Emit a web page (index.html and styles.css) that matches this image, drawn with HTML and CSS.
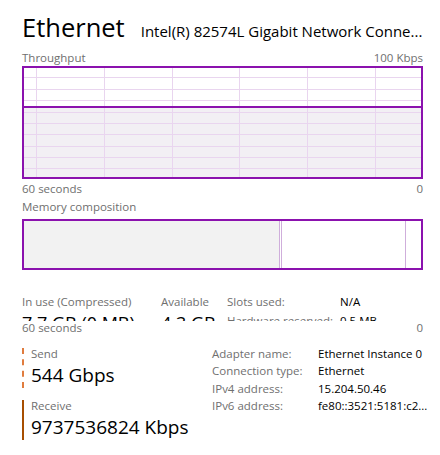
FILE: index.html
```html
<!DOCTYPE html>
<html lang="en">
<head>
<meta charset="utf-8">
<title>Ethernet</title>
<link rel="stylesheet" href="styles.css">
</head>
<body>
<div class="page">
  <header class="head">
    <h1 class="title">Ethernet</h1>
    <div class="subtitle">Intel(R) 82574L Gigabit Network Conne...</div>
  </header>

  <div class="axis axis-top"><span>Throughput</span><span>100 Kbps</span></div>
  <svg class="graph" width="401" height="113" viewBox="0 0 401 113">
    <rect x="1" y="41" width="399" height="71" fill="#f2eff4"/>
    <g stroke="#e9d5ef" stroke-width="1">
      <line x1="14.5" y1="1" x2="14.5" y2="112"/>
      <line x1="82.5" y1="1" x2="82.5" y2="112"/>
      <line x1="150.5" y1="1" x2="150.5" y2="112"/>
      <line x1="217.5" y1="1" x2="217.5" y2="112"/>
      <line x1="285.5" y1="1" x2="285.5" y2="112"/>
      <line x1="353.5" y1="1" x2="353.5" y2="112"/>
      <line x1="1" y1="11.5" x2="400" y2="11.5"/>
      <line x1="1" y1="23.5" x2="400" y2="23.5"/>
      <line x1="1" y1="34.5" x2="400" y2="34.5"/>
      <line x1="1" y1="46.5" x2="400" y2="46.5"/>
      <line x1="1" y1="57.5" x2="400" y2="57.5"/>
      <line x1="1" y1="68.5" x2="400" y2="68.5"/>
      <line x1="1" y1="80.5" x2="400" y2="80.5"/>
      <line x1="1" y1="91.5" x2="400" y2="91.5"/>
      <line x1="1" y1="102.5" x2="400" y2="102.5"/>
    </g>
    <line x1="1" y1="41" x2="400" y2="41" stroke="#8b12ae" stroke-width="2"/>
    <rect x="1" y="1" width="399" height="111" fill="none" stroke="#8b12ae" stroke-width="2"/>
  </svg>
  <div class="axis axis-foot"><span>60 seconds</span><span>0</span></div>

  <section class="clip">
    <div class="axis axis-mem"><span>Memory composition</span></div>
    <div class="membar">
      <div class="seg seg-used"></div>
      <div class="seg seg-mod"></div>
      <div class="seg seg-standby"></div>
      <div class="seg seg-free"></div>
    </div>
    <div class="stats">
      <div class="stat stat-use">
        <div class="lbl">In use (Compressed)</div>
        <div class="big">7.7 GB (0 MB)</div>
      </div>
      <div class="stat stat-avail">
        <div class="lbl">Available</div>
        <div class="big">4.3 GB</div>
      </div>
      <dl class="kv">
        <dt>Slots used:</dt><dd>N/A</dd>
        <dt>Hardware reserved:</dt><dd>0.5 MB</dd>
      </dl>
    </div>
  </section>

  <section class="panel">
    <div class="axis"><span>60 seconds</span><span>0</span></div>
    <div class="net">
      <div class="rates">
        <div class="rate rate-send">
          <div class="lbl">Send</div>
          <div class="big">544 Gbps</div>
        </div>
        <div class="rate rate-recv">
          <div class="lbl">Receive</div>
          <div class="big">9737536824 Kbps</div>
        </div>
      </div>
      <dl class="props">
        <dt>Adapter name:</dt><dd>Ethernet Instance 0</dd>
        <dt>Connection type:</dt><dd>Ethernet</dd>
        <dt>IPv4 address:</dt><dd>15.204.50.46</dd>
        <dt>IPv6 address:</dt><dd>fe80::3521:5181:c2...</dd>
      </dl>
    </div>
  </section>
</div>
</body>
</html>
```

FILE: styles.css
```css
* { box-sizing: border-box; }
html, body { margin: 0; padding: 0; background: #ffffff; }
body {
  font-family: "Open Sans", "Noto Sans", "Liberation Sans", sans-serif;
  color: #1a1a1a;
}
.page {
  width: 440px;
  padding: 0 17px 0 22px;
}
.head {
  display: flex;
  align-items: baseline;
  padding-top: 10px;
  height: 44px;
}
.title {
  margin: 0;
  font-size: 25.5px;
  font-weight: 400;
  line-height: 34px;
  color: #000;
}
.subtitle {
  margin-left: 16px;
  font-size: 15px;
  color: #000;
  white-space: nowrap;
}
.axis {
  display: flex;
  justify-content: space-between;
  font-size: 11.5px;
  line-height: 14px;
  color: #6f6f6f;
}
.axis-top { margin-top: 7px; }
.graph { display: block; margin-top: 1px; }
.axis-foot { margin-top: 3px; }

.clip {
  height: 125px;
  overflow: hidden;
}
.axis-mem { margin-top: 4px; }
.membar {
  display: flex;
  margin-top: 5px;
  height: 51px;
  border: 2px solid #8b12ae;
}
.seg { height: 100%; border-right: 1px solid #cfaedb; }
.seg-used { width: 256px; background: #f2f2f2; }
.seg-mod { width: 2px; }
.seg-standby { width: 124px; }
.seg-free { flex: 1; border-right: 0; }

.stats {
  display: flex;
  align-items: flex-start;
  margin-top: 25px;
}
.lbl {
  font-size: 11.5px;
  line-height: 14px;
  color: #6f6f6f;
}
.big {
  font-size: 18px;
  line-height: 24px;
  color: #000;
  white-space: nowrap;
}
.stat .big { margin-top: 2px; }
.stat-use { width: 139px; flex-shrink: 0; }
.stat-avail { width: 66px; flex-shrink: 0; }
.kv {
  margin: 0;
  display: grid;
  grid-template-columns: 113px auto;
  align-content: start;
  row-gap: 5px;
  font-size: 11.5px;
  line-height: 14px;
}
.kv dt { color: #6f6f6f; white-space: nowrap; }
.kv dd { margin: 0; color: #000; white-space: nowrap; }

.net {
  display: flex;
  align-items: flex-start;
  margin-top: 10px;
}
.rates {
  width: 190px;
  flex-shrink: 0;
  padding-top: 3px;
}
.rate {
  padding-left: 7px;
  height: 40px;
}
.rate .lbl { line-height: 12px; }
.rate .big { margin-top: 3px; font-size: 19px; }
.rate-send { border-left: 2px dashed #e07c3e; }
.rate-recv { margin-top: 12px; border-left: 2px solid #a74f01; }
.props {
  margin: 0;
  display: grid;
  grid-template-columns: 106px auto;
  align-content: start;
  font-size: 11.5px;
  line-height: 17.3px;
}
.props dt { color: #6f6f6f; white-space: nowrap; }
.props dd { margin: 0; color: #000; white-space: nowrap; }
```
